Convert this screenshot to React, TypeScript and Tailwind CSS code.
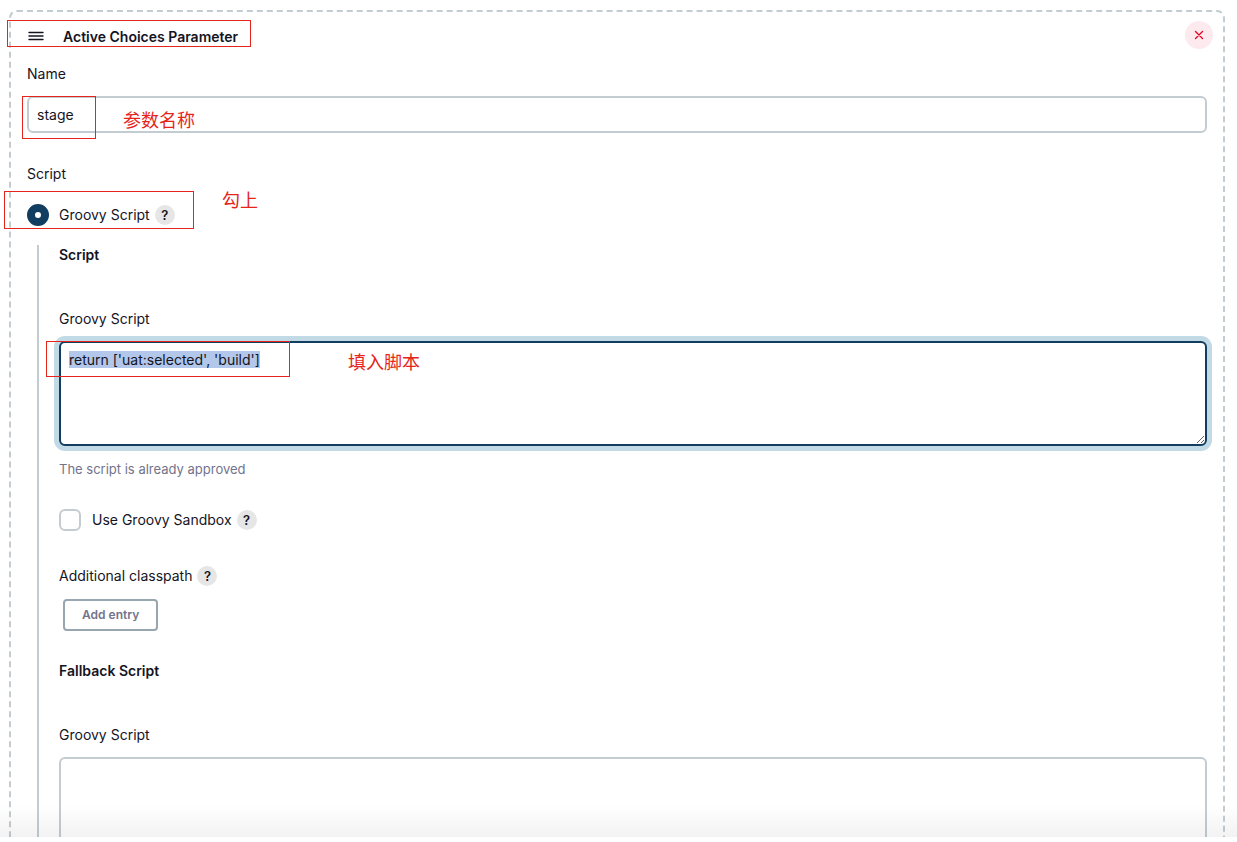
import React, { useEffect, useId, useRef } from 'react';

const HelpButton: React.FC<{ topic: string }> = ({ topic }) => (
  <button
    type="button"
    aria-label={`Help for feature: ${topic}`}
    className="flex size-5 shrink-0 items-center justify-center rounded-full bg-[#e6e6e6] text-[13px] font-semibold text-[#14141f]"
  >
    ?
  </button>
);

// Red outline drawn on top of the form; the caller passes where it sits.
const Outline: React.FC<{ className: string }> = ({ className }) => (
  <div className={`pointer-events-none absolute border border-[#e5251b] ${className}`} />
);

const Note: React.FC<{ className: string; children: React.ReactNode }> = ({ className, children }) => (
  <span
    className={`pointer-events-none absolute font-['Noto_Sans_CJK_SC',sans-serif] text-lg leading-5 whitespace-nowrap text-[#e5251b] ${className}`}
  >
    {children}
  </span>
);

const ScriptField: React.FC<{ value?: string; selected?: boolean; children?: React.ReactNode }> = ({
  value = '',
  selected = false,
  children,
}) => {
  const id = useId();
  const ref = useRef<HTMLTextAreaElement>(null);

  useEffect(() => {
    if (!selected) return;
    ref.current?.focus({ preventScroll: true });
    ref.current?.select();
  }, [selected]);

  return (
    <div className="mt-11">
      <label htmlFor={id} className="block">
        Groovy Script
      </label>
      <div className="relative mt-3">
        <textarea
          id={id}
          ref={ref}
          defaultValue={value}
          spellCheck={false}
          className="block h-[105px] w-full resize-y rounded-md border-2 border-[#c3ccd1] bg-white p-2 leading-[17px] outline-none selection:bg-[#b3c7ea] selection:text-[#14141f] focus:border-[#103d60] focus:ring-[5px] focus:ring-[#c2d9e6]"
        />
        {children}
      </div>
    </div>
  );
};

export default function App() {
  return (
    <div className="flex h-screen flex-col bg-white pb-[5px] font-[Inter,'Noto_Sans_CJK_SC',sans-serif] text-sm leading-5 text-[#14141f]">
      <main className="relative min-h-0 flex-1 overflow-hidden">
        <section className="mt-2.5 mr-3 ml-[9px] rounded-lg border-2 border-dashed border-[#c3ccd1] px-4 pt-[9px] pb-8">
          <header className="relative flex h-7 items-center">
            <button type="button" aria-label="Drag to reorder" className="ml-px">
              <svg viewBox="0 0 16 16" className="size-4" stroke="#14141f" strokeWidth="1.4" strokeLinecap="round">
                <path d="M1 5.5h14M1 9h14M1 12.5h14" />
              </svg>
            </button>
            <h2 className="ml-[19px] pt-1 font-semibold">Active Choices Parameter</h2>
            <button
              type="button"
              aria-label="Delete"
              className="-mr-1.5 ml-auto flex size-7 items-center justify-center rounded-full bg-[#fdeaee]"
            >
              <svg viewBox="0 0 10 10" className="size-2.5" stroke="#e6001f" strokeWidth="1.3" strokeLinecap="round">
                <path d="M1.5 1.5l7 7M8.5 1.5l-7 7" />
              </svg>
            </button>
            <Outline className="-top-px -left-5 h-[27px] w-[244px]" />
          </header>

          <div className="mt-[15px]">
            <label htmlFor="name" className="block">
              Name
            </label>
            <div className="relative mt-3">
              <input
                id="name"
                type="text"
                defaultValue="stage"
                className="block h-[37px] w-full rounded-md border-2 border-[#c3ccd1] bg-white px-2 outline-none"
              />
              <Outline className="top-0 -left-[5px] h-[43px] w-[74px]" />
              <Note className="top-[13px] left-24">参数名称</Note>
            </div>
          </div>

          <fieldset className="mt-[31px]">
            <legend>Script</legend>
            <div className="relative mt-5 flex h-[22px] items-center">
              <input
                id="groovy"
                type="radio"
                name="script"
                defaultChecked
                className="size-[22px] appearance-none rounded-full border-2 border-[#c3ccd1] bg-white checked:border-8 checked:border-[#103d60]"
              />
              <label htmlFor="groovy" className="mr-[5px] ml-2.5">
                Groovy Script
              </label>
              <HelpButton topic="Groovy Script" />
              <Outline className="-top-[13px] -left-[23px] h-[38px] w-[190px]" />
              <Note className="-top-[15px] left-[195px]">勾上</Note>
            </div>

            <div className="mt-[19px] ml-2.5 border-l-2 border-[#c3ccd1] pb-8 pl-5">
              <h3 className="font-semibold">Script</h3>
              <ScriptField value="return ['uat:selected', 'build']" selected>
                <Outline className="top-0 -left-[13px] h-9 w-[244px]" />
                <Note className="top-2.5 left-[289px]">填入脚本</Note>
              </ScriptField>
              <p className="mt-[13px] text-[13px] text-[#73738c]">The script is already approved</p>

              <div className="mt-[30px] flex h-[22px] items-center">
                <input
                  id="sandbox"
                  type="checkbox"
                  className="size-[22px] appearance-none rounded-md border-2 border-[#c3ccd1] bg-white checked:bg-[#103d60]"
                />
                <label htmlFor="sandbox" className="mr-[5px] ml-[11px]">
                  Use Groovy Sandbox
                </label>
                <HelpButton topic="Use Groovy Sandbox" />
              </div>

              <div className="mt-[35px] flex items-center gap-[5px]">
                <span>Additional classpath</span>
                <HelpButton topic="Additional classpath" />
              </div>
              <button
                type="button"
                className="mt-[13px] ml-1 block h-8 rounded-[4px] border-2 border-[#98a6af] px-[17px] text-xs font-semibold text-[#73738c]"
              >
                Add entry
              </button>

              <h3 className="mt-[30px] font-semibold">Fallback Script</h3>
              <ScriptField />
            </div>
          </fieldset>
        </section>
        <div className="pointer-events-none absolute inset-x-0 bottom-0 h-8 bg-linear-to-t from-black/5 to-transparent" />
      </main>
    </div>
  );
}
